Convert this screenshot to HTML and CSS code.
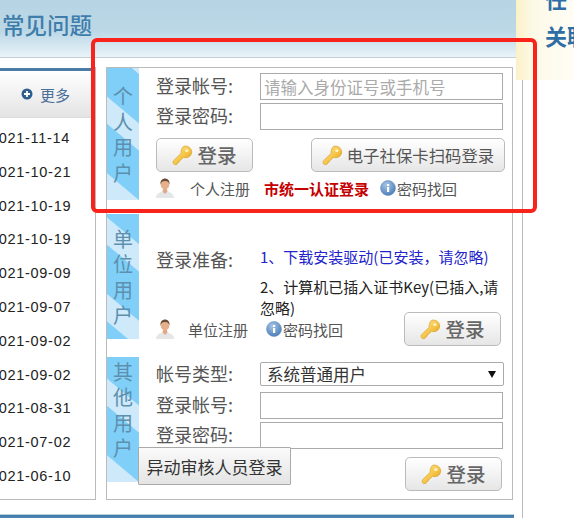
FILE: index.html
```html
<!DOCTYPE html>
<html lang="zh">
<head>
<meta charset="utf-8">
<title>登录</title>
<link rel="stylesheet" href="styles.css">
</head>
<body>
<svg class="defs" width="0" height="0" aria-hidden="true">
  <defs>
    <linearGradient id="gold" x1="0" y1="0" x2="1" y2="1">
      <stop offset="0" stop-color="#fde9a0"/><stop offset="0.55" stop-color="#f6c445"/><stop offset="1" stop-color="#d99a1e"/>
    </linearGradient>
    <radialGradient id="blueball" cx="0.4" cy="0.3" r="0.8">
      <stop offset="0" stop-color="#a9c6e6"/><stop offset="1" stop-color="#3f76b5"/>
    </radialGradient>
    <symbol id="key" viewBox="0 0 24 24">
      <path d="M14.500 1.500c4-1 8 2.500 8 6.500 0 3.500-3 6.500-6.500 6.500-1 0-1.800-.2-2.600-.6L9.500 17.500l-1 .2-.3 2-2 .3-.3 2-3 .5-1.700-1.800.3-2.500 9-8.800c-.4-2.600.5-7 3.800-8.400z" fill="url(#gold)" stroke="#d9a22c" stroke-width=".8"/>
      <ellipse cx="17" cy="6.500" rx="2" ry="1.600" fill="#fff3c4"/>
    </symbol>
    <symbol id="person" viewBox="0 0 18 20">
      <path d="M0 20c0-4 3-5.500 6-6.500h6c3 1 6 2.500 6 6.500z" fill="#e4e6e8"/>
      <path d="M6.500 13.500L9 16l2.500-2.500L11 11H7z" fill="#e0a987"/>
      <ellipse cx="9" cy="6.500" rx="4.300" ry="5" fill="#e6b08c"/>
      <path d="M4.500 6.500C4 2.500 6.500.5 9 .5s5 2 4.500 6C13 4 11.500 3 9 3S5 4 4.500 6.500z" fill="#6b4a32"/>
    </symbol>
    <symbol id="info" viewBox="0 0 16 16">
      <circle cx="8" cy="8" r="7.500" fill="url(#blueball)" stroke="#6f94bf" stroke-width=".6"/>
      <rect x="7" y="7" width="2.200" height="5" fill="#fff"/>
      <rect x="7" y="4" width="2.200" height="2" fill="#fff"/>
    </symbol>
  </defs>
</svg>
<div class="page">
  <div class="main">
    <header class="band"><h1 class="band-title">常见问题</h1></header>
    <div class="content">
      <section class="news">
        <div class="news-head">
          <svg class="more-icon" viewBox="0 0 12 12" aria-hidden="true"><circle cx="6" cy="6" r="5.500" fill="#2f5f8f"/><path d="M3 6h6M6 3v6" stroke="#fff" stroke-width="1.800"/></svg>
          <span class="more-text">更多</span>
        </div>
        <ul class="dates">
          <li>2021-11-14</li><li>2021-10-21</li><li>2021-10-19</li><li>2021-10-19</li>
          <li>2021-09-09</li><li>2021-09-07</li><li>2021-09-02</li><li>2021-09-02</li>
          <li>2021-08-31</li><li>2021-07-02</li><li>2021-06-10</li>
        </ul>
      </section>

      <section class="login">
        <div class="block block-one">
          <div class="stripe">个<br>人<br>用<br>户</div>
          <div class="body">
            <div class="field"><label class="label">登录帐号:</label><input class="input" placeholder="请输入身份证号或手机号"></div>
            <div class="field"><label class="label">登录密码:</label><input class="input"></div>
            <div class="actions">
              <button class="btn"><svg class="key"><use href="#key"/></svg>登录</button>
              <button class="btn btn-wide"><svg class="key"><use href="#key"/></svg>电子社保卡扫码登录</button>
            </div>
            <div class="links">
              <svg class="person"><use href="#person"/></svg>
              <span class="reg">个人注册</span>
              <span class="unified">市统一认证登录</span>
              <span class="find"><svg class="info"><use href="#info"/></svg>密码找回</span>
            </div>
          </div>
        </div>

        <div class="block block-two">
          <div class="stripe stripe-shift">单<br>位<br>用<br>户</div>
          <div class="body">
            <div class="prepare">
              <span class="label label-prep">登录准备:</span>
              <div class="steps">
                <p class="step-link">1、下载安装驱动(已安装，请忽略)</p>
                <p class="step-text">2、计算机已插入证书Key(已插入,请忽略)</p>
              </div>
            </div>
            <div class="org-foot">
              <svg class="person"><use href="#person"/></svg>
              <span class="reg">单位注册</span>
              <span class="find find-org"><svg class="info"><use href="#info"/></svg>密码找回</span>
              <button class="btn btn-right"><svg class="key"><use href="#key"/></svg>登录</button>
            </div>
          </div>
        </div>

        <div class="block block-three">
          <div class="stripe stripe-top">其<br>他<br>用<br>户</div>
          <div class="body">
            <div class="field field-select"><label class="label">帐号类型:</label>
              <div class="select">系统普通用户<span class="arrow"></span></div>
            </div>
            <div class="field field-other"><label class="label">登录帐号:</label><input class="input"></div>
            <div class="field field-other"><label class="label">登录密码:</label><input class="input"></div>
            <div class="actions actions-end">
              <button class="btn"><svg class="key"><use href="#key"/></svg>登录</button>
            </div>
          </div>
          <button class="audit">异动审核人员登录</button>
        </div>
      </section>
    </div>
    <div class="foot-bar"></div>
  </div>
  <aside class="side">
    <div class="banner"><span class="banner-top">任</span><span class="banner-line">关联</span></div>
    <div class="side-rule"></div>
  </aside>
  <div class="annotation"></div>
</div>
</body>
</html>
```

FILE: styles.css
```css
* { box-sizing: border-box; }
html, body { margin: 0; padding: 0; background: #fff; }
body { font-family: "Noto Sans CJK SC", "Liberation Sans", sans-serif; }
.defs { position: absolute; }
.page {
  position: relative;
  width: 574px;
  height: 518px;
  overflow: hidden;
  display: flex;
}
.main { width: 516px; flex: none; display: flex; flex-direction: column; }

.band {
  height: 58px;
  flex: none;
  background: linear-gradient(#b6d4e4 0, #bcd8e7 55%, #e9f3f8 100%);
  border-bottom: 1px solid #c4ced4;
  padding: 9px 0 0 2px;
}
.band-title {
  margin: 0;
  font-size: 22.500px;
  font-weight: 500;
  line-height: 30px;
  color: #3f7dab;
}

.content { display: flex; height: 433px; margin-top: 9px; flex: none; }

.news {
  width: 96px;
  flex: none;
  border-right: 1px solid #bbb;
  border-bottom: 1px solid #bbb;
  overflow: hidden;
}
.news-head {
  height: 50px;
  margin-top: 1px;
  border-top: 3px solid #4c7ca6;
  border-bottom: 1px solid #ddd;
  background: linear-gradient(#fff, #e4e4e4);
  display: flex;
  align-items: center;
  padding-left: 21px;
  gap: 7px;
}
.more-icon { width: 12px; height: 12px; flex: none; }
.more-text { font-size: 15px; color: #4a6f99; white-space: nowrap; }
.dates {
  list-style: none;
  margin: 4px 0 0;
  padding: 0;
  margin-left: -10px;
  font-family: "Liberation Sans", sans-serif;
  font-size: 14.500px;
  letter-spacing: .7px;
  color: #222;
}
.dates li { height: 33.800px; line-height: 33.800px; white-space: nowrap; }

.login {
  width: 407px;
  margin-left: 10px;
  flex: none;
  border: 1px solid #bbb;
  background: #fff;
  display: flex;
  flex-direction: column;
}
.block { display: flex; position: relative; }
.block-one { height: 132px; }
.block-two { height: 125px; margin-top: 14px; }
.block-three { height: 125px; margin-top: 18px; }

.stripe {
  width: 32px;
  flex: none;
  display: flex;
  align-items: center;
  justify-content: center;
  text-align: center;
  font-size: 20px;
  line-height: 25.500px;
  color: #5d8fae;
  background: repeating-linear-gradient(40deg, #cde9fa 0 20px, #7fcff8 21px 58px, #cde9fa 58.700px);
}
.stripe-shift {
  background: repeating-linear-gradient(40deg, #7fcff8 0 13px, #cde9fa 14px 34px, #7fcff8 35px 58.700px);
}
.stripe-top { padding-bottom: 20px; }
.body { flex: 1; min-width: 0; padding-left: 17px; padding-right: 7px; }

.field { display: flex; align-items: center; margin-top: 3px; }
.block-one .field:first-child { margin-top: 5px; }
.label {
  width: 104px;
  flex: none;
  font-size: 18px;
  line-height: 25px;
  padding-bottom: 2px;
  color: #555;
}
.input {
  width: 243px;
  height: 27px;
  border: 1px solid #aaa;
  padding: 0 3px;
  font: 16.500px "Noto Sans CJK SC", sans-serif;
  color: #333;
  background: #fff;
  outline: none;
}
.input::placeholder { color: #aaa; opacity: 1; }

.actions { display: flex; justify-content: space-between; margin-top: 8px; }
.actions-end { justify-content: flex-end; }
.btn {
  height: 34px;
  width: 97px;
  padding: 0;
  border: 1px solid #bbb;
  border-radius: 5px;
  background: linear-gradient(#fff, #e6e6e6);
  font: 500 19.500px/32px "Noto Sans CJK SC", sans-serif;
  color: #666;
  display: flex;
  align-items: center;
  justify-content: center;
  gap: 4px;
}
.btn-wide { width: 194px; font-size: 16.400px; font-weight: 400; color: #555; }
.key { width: 21px; height: 21px; flex: none; }

.links { display: flex; align-items: center; height: 20px; margin-top: 6px; font-size: 15px; color: #555; white-space: nowrap; }
.person { width: 18px; height: 20px; flex: none; }
.reg { margin-left: 16px; }
.unified { margin-left: 14px; font-weight: 700; color: #c40000; }
.find { display: flex; align-items: center; margin-left: 11px; color: #555; }
.find-org { margin-left: 18px; }
.info { width: 16px; height: 16px; flex: none; margin-right: 1px; }

.prepare { display: flex; padding-top: 28px; }
.label-prep { line-height: 34px; height: 34px; padding-bottom: 0; }
.steps { width: 242px; font-size: 15px; line-height: 21px; }
.step-link { margin: 0; color: #2323cc; line-height: 26px; padding-top: 2px; }
.step-text { margin: 5.500px 0 0; color: #222; }
.org-foot { display: flex; align-items: center; margin-top: -5.500px; height: 34px; font-size: 15px; color: #555; white-space: nowrap; }
.btn-right { margin-left: auto; margin-right: 4px; }
.org-foot .reg { margin-left: 14px; }

.field-select { margin-top: 3.500px; }
.select {
  width: 244px;
  height: 24px;
  border: 1px solid #aaa;
  border-radius: 2px;
  padding-left: 6px;
  font-size: 16.500px;
  line-height: 24px;
  color: #333;
  display: flex;
  justify-content: space-between;
  align-items: center;
}
.arrow {
  width: 0;
  height: 0;
  margin-right: 7px;
  border-left: 4px solid transparent;
  border-right: 4px solid transparent;
  border-top: 7px solid #111;
}
.field-other { margin-top: 3px; }
.field-select + .field-other { margin-top: 4.500px; }
.block-three .actions { margin-top: 8px; margin-right: 3px; }

.audit {
  position: absolute;
  left: 31px;
  top: 90px;
  width: 153px;
  height: 38px;
  padding: 0;
  border: 1px solid #aaa;
  border-radius: 1px;
  background: linear-gradient(#fafafa, #e4e4e4);
  font: 17px "Noto Sans CJK SC", sans-serif;
  color: #333;
}

.foot-bar {
  height: 6px;
  width: 514px;
  margin-top: 14px;
  flex: none;
  border-top: 1px solid #b8cfe0;
  background: linear-gradient(#3f78a8, #5a8fb8);
}

.side { flex: 1; min-width: 0; display: flex; flex-direction: column; }
.banner {
  height: 80px;
  flex: none;
  overflow: hidden;
  padding-left: 29px;
  background: linear-gradient(90deg, #fbf1c8 0, #fdf9e8 30%, #fffdf6 100%);
  color: #2f6ea5;
  font-weight: 700;
  font-size: 22px;
  white-space: nowrap;
}
.banner-top { display: block; margin-top: -17px; line-height: 30px; }
.banner-line { display: block; margin-top: 7px; line-height: 30px; }
.side-rule { flex: 1; margin-left: 6px; border-left: 1px solid #bbb; }

.annotation {
  position: absolute;
  left: 91px;
  top: 38px;
  width: 446px;
  height: 175px;
  border: 4px solid #f8231b;
  border-radius: 6px;
  pointer-events: none;
}
```
